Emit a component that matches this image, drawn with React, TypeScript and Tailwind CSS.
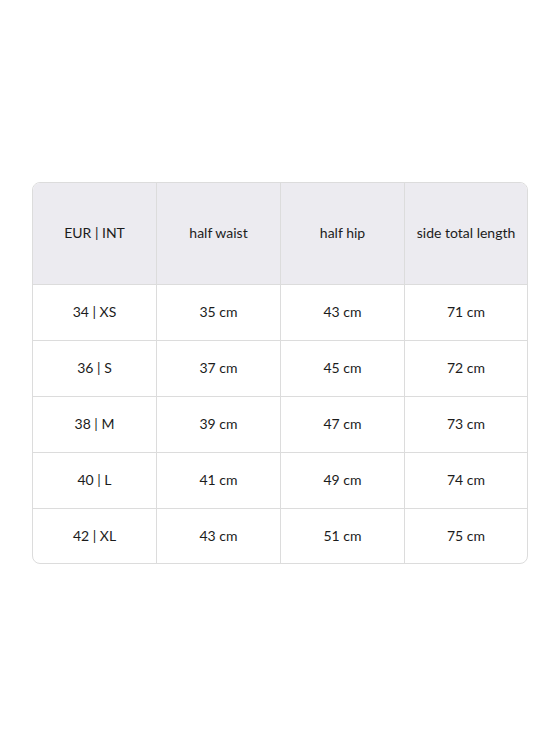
const headers = ['EUR | INT', 'half waist', 'half hip', 'side total length'];

const rows = [
  ['34 | XS', '35 cm', '43 cm', '71 cm'],
  ['36 | S', '37 cm', '45 cm', '72 cm'],
  ['38 | M', '39 cm', '47 cm', '73 cm'],
  ['40 | L', '41 cm', '49 cm', '74 cm'],
  ['42 | XL', '43 cm', '51 cm', '75 cm'],
];

export default function App() {
  return (
    <div className="w-[560px] h-[746px] bg-white pt-[182px] px-[32px] font-['Lato','Liberation_Sans',sans-serif] text-[14px] text-[#1c1c1c]">
      <div className="border border-[#dcdcdc] rounded-[8px] overflow-hidden">
        <div className="grid grid-cols-[123px_124px_124px_1fr] bg-[#ecebf0] h-[101px]">
          {headers.map((h, i) => (
            <div
              key={h}
              className={`flex items-center justify-center pb-[2px] ${i > 0 ? 'border-l border-[#dcdcdc]' : ''}`}
            >
              {h}
            </div>
          ))}
        </div>
        {rows.map((r, ri) => (
          <div
            key={r[0]}
            className={`grid grid-cols-[123px_124px_124px_1fr] border-t border-[#dcdcdc] ${ri === rows.length - 1 ? 'h-[55px]' : 'h-[56px]'}`}
          >
            {r.map((c, i) => (
              <div
                key={i}
                className={`flex items-center justify-center pb-[2px] ${i > 0 ? 'border-l border-[#dcdcdc]' : ''}`}
              >
                {c}
              </div>
            ))}
          </div>
        ))}
      </div>
    </div>
  );
}
